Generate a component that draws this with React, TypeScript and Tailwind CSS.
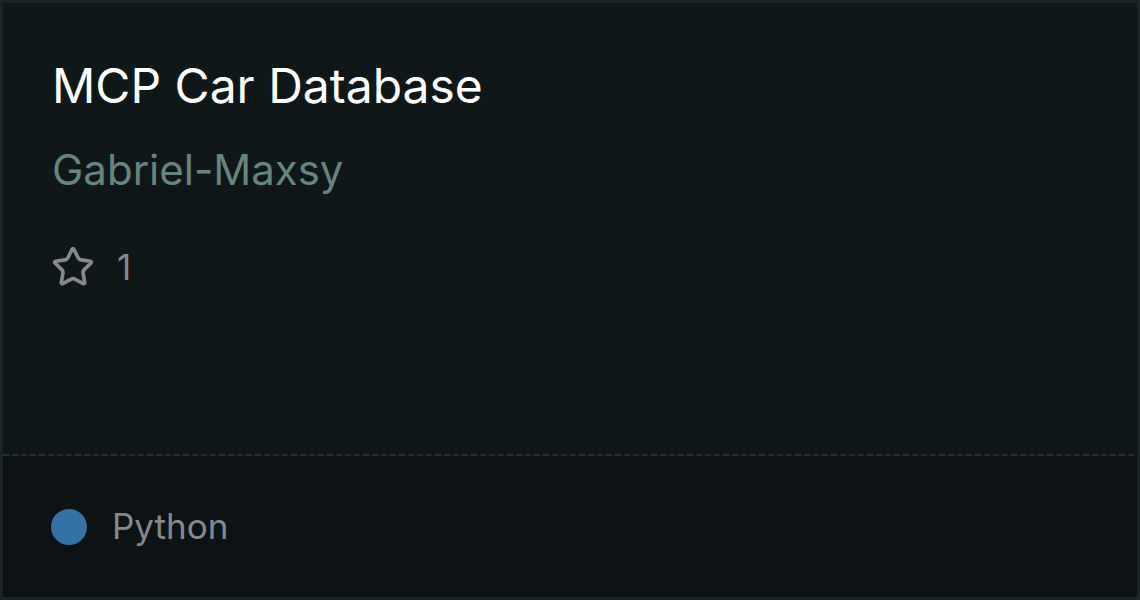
import { Star } from "lucide-react";

// Repo card — name, owner, stars, and a language footer.
export default function App() {
  return (
    <div
      className="h-[600px] w-[1140px] flex flex-col border-[3px] border-[#1d2427] bg-[#101719]"
      style={{ fontFamily: "Inter, 'Noto Sans', sans-serif" }}
    >
      <div className="flex-1 px-[49px] pt-[53px]">
        <div className="text-[48px] leading-[60px] text-white">MCP Car Database</div>
        <div className="mt-[29px] text-[42px] leading-[50px] text-[#68847f]">Gabriel-Maxsy</div>
        <div className="mt-[50px] flex items-center gap-[22px] text-[#85898c]">
          <Star size={44} strokeWidth={2} className="-ml-[1px]" />
          <span className="text-[35px] leading-none">1</span>
        </div>
      </div>
      <div className="h-[2px] bg-[repeating-linear-gradient(90deg,#262d31_0_6px,transparent_6px_9px)]" />
      <div className="h-[141px] flex items-center gap-[25px] px-[48px] bg-[#0d1315]">
        <span className="h-[36px] w-[36px] rounded-full bg-[#3572a5]" />
        <span className="text-[35px] text-[#85898c]">Python</span>
      </div>
    </div>
  );
}
